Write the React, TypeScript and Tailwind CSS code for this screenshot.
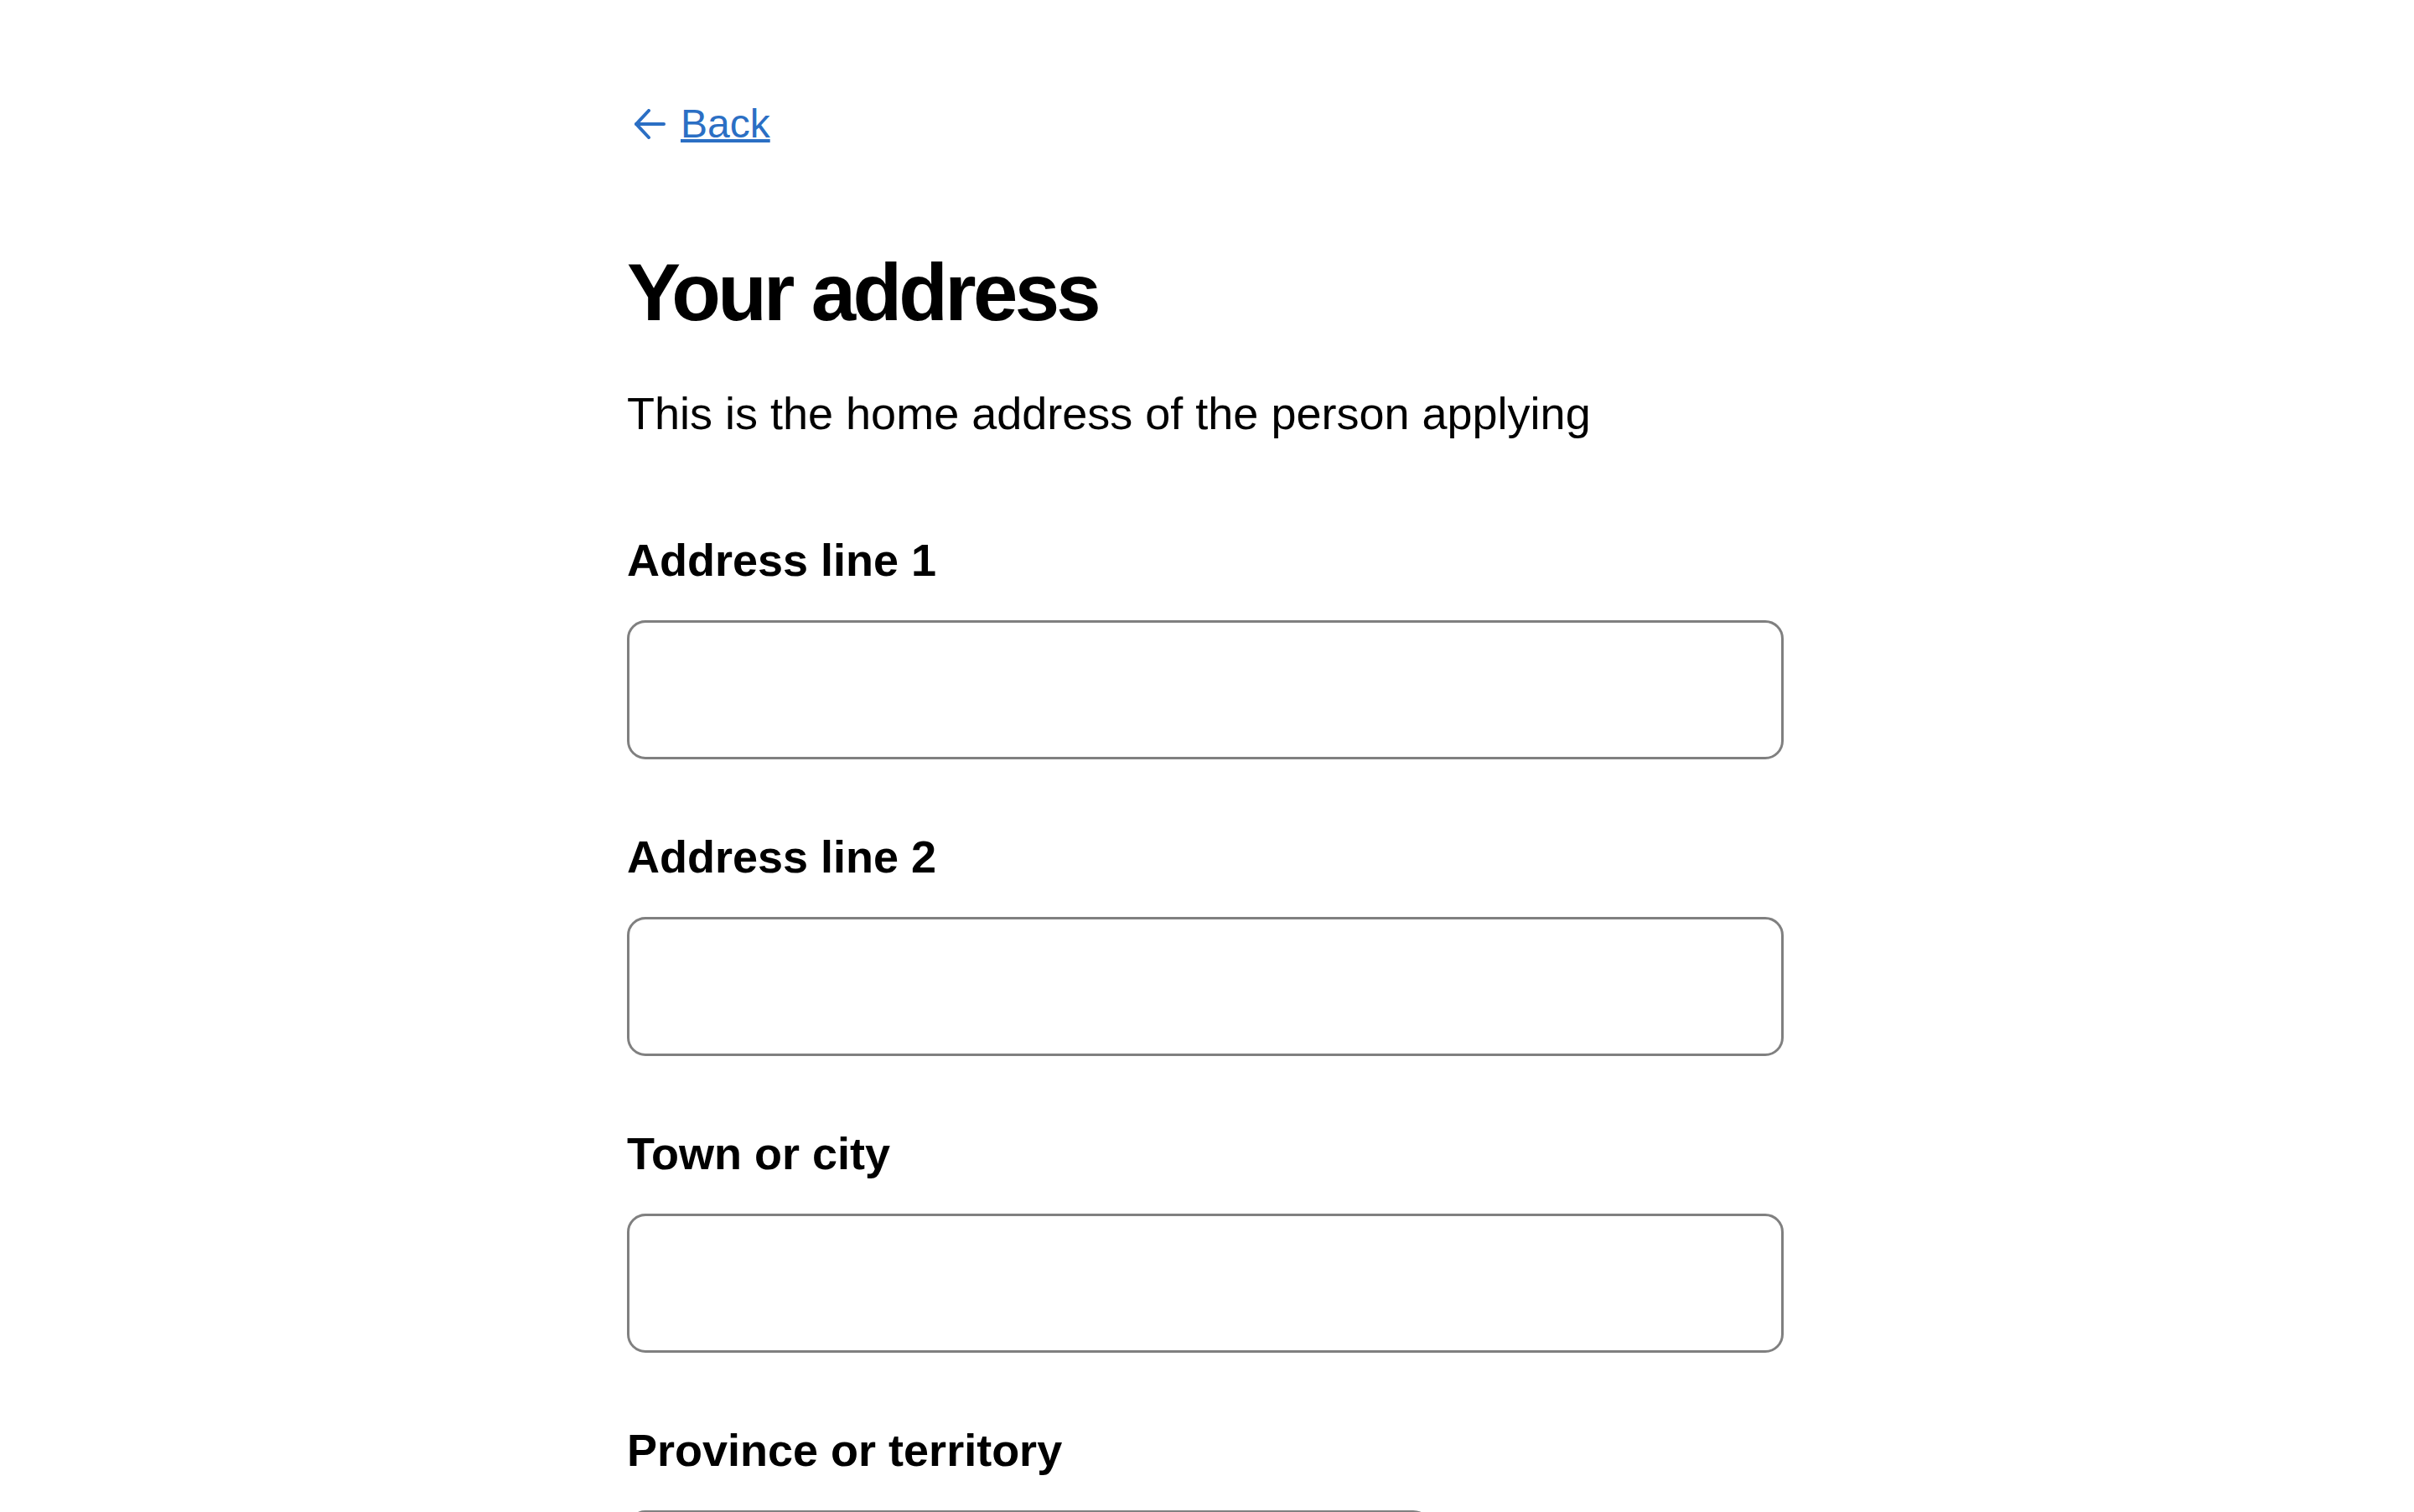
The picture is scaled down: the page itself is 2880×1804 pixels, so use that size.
import React from "react";

function Field({ label, id }: { label: string; id: string }) {
  return (
    <div className="flex flex-col">
      <label htmlFor={id} className="block text-[54px] leading-[64px] font-bold text-black">
        {label}
      </label>
      <input
        id={id}
        type="text"
        className="mt-[40px] block h-[166px] w-[1380px] rounded-[22px] border-[3px] border-[#808080] bg-white px-[24px] text-[54px] outline-none"
      />
    </div>
  );
}

export default function App() {
  return (
    <div className="min-h-screen bg-white font-['Liberation_Sans',Arial,Helvetica,sans-serif] text-black">
      <div className="mx-auto w-[1384px] pt-[120px] pb-[240px]">
        <div className="flex h-[56px] items-center">
          <a href="#" className="flex items-center text-[#2b6fc4]">
            <svg
              width="40"
              height="36"
              viewBox="0 0 40 36"
              fill="none"
              stroke="currentColor"
              strokeWidth="4"
              strokeLinecap="round"
              strokeLinejoin="round"
              className="ml-[7px]"
            >
              <path d="M19 2 L4 18 L19 34" />
              <path d="M4 18 H37" />
            </svg>
            <span className="ml-[17px] text-[48px] leading-[56px] underline decoration-4 underline-offset-2">
              Back
            </span>
          </a>
        </div>

        <h1 className="mt-[117px] text-[96px] leading-[112px] font-bold tracking-[-3.7px]">
          Your address
        </h1>

        <p className="mt-[56px] text-[54px] leading-[64px]">
          This is the home address of the person applying
        </p>

        <form className="mt-[111px] flex flex-col gap-[84px]">
          <Field label="Address line 1" id="line1" />
          <Field label="Address line 2" id="line2" />
          <Field label="Town or city" id="city" />
          <div className="flex flex-col">
            <label htmlFor="province" className="block text-[54px] leading-[64px] font-bold">
              Province or territory
            </label>
            <div className="relative mt-[40px] w-[960px]">
              <select
                id="province"
                className="block h-[166px] w-full appearance-none rounded-[22px] border-[3px] border-[#808080] bg-white px-[24px] text-[54px] outline-none"
              >
                <option value=""></option>
                <option>Alberta</option>
                <option>British Columbia</option>
                <option>Manitoba</option>
                <option>New Brunswick</option>
                <option>Newfoundland and Labrador</option>
                <option>Nova Scotia</option>
                <option>Ontario</option>
                <option>Prince Edward Island</option>
                <option>Quebec</option>
                <option>Saskatchewan</option>
              </select>
              <svg
                width="40"
                height="40"
                viewBox="0 0 24 24"
                fill="none"
                stroke="#000"
                strokeWidth="2.5"
                strokeLinecap="round"
                strokeLinejoin="round"
                className="pointer-events-none absolute right-[40px] top-[63px]"
              >
                <path d="m6 9 6 6 6-6" />
              </svg>
            </div>
          </div>
        </form>
      </div>
    </div>
  );
}
